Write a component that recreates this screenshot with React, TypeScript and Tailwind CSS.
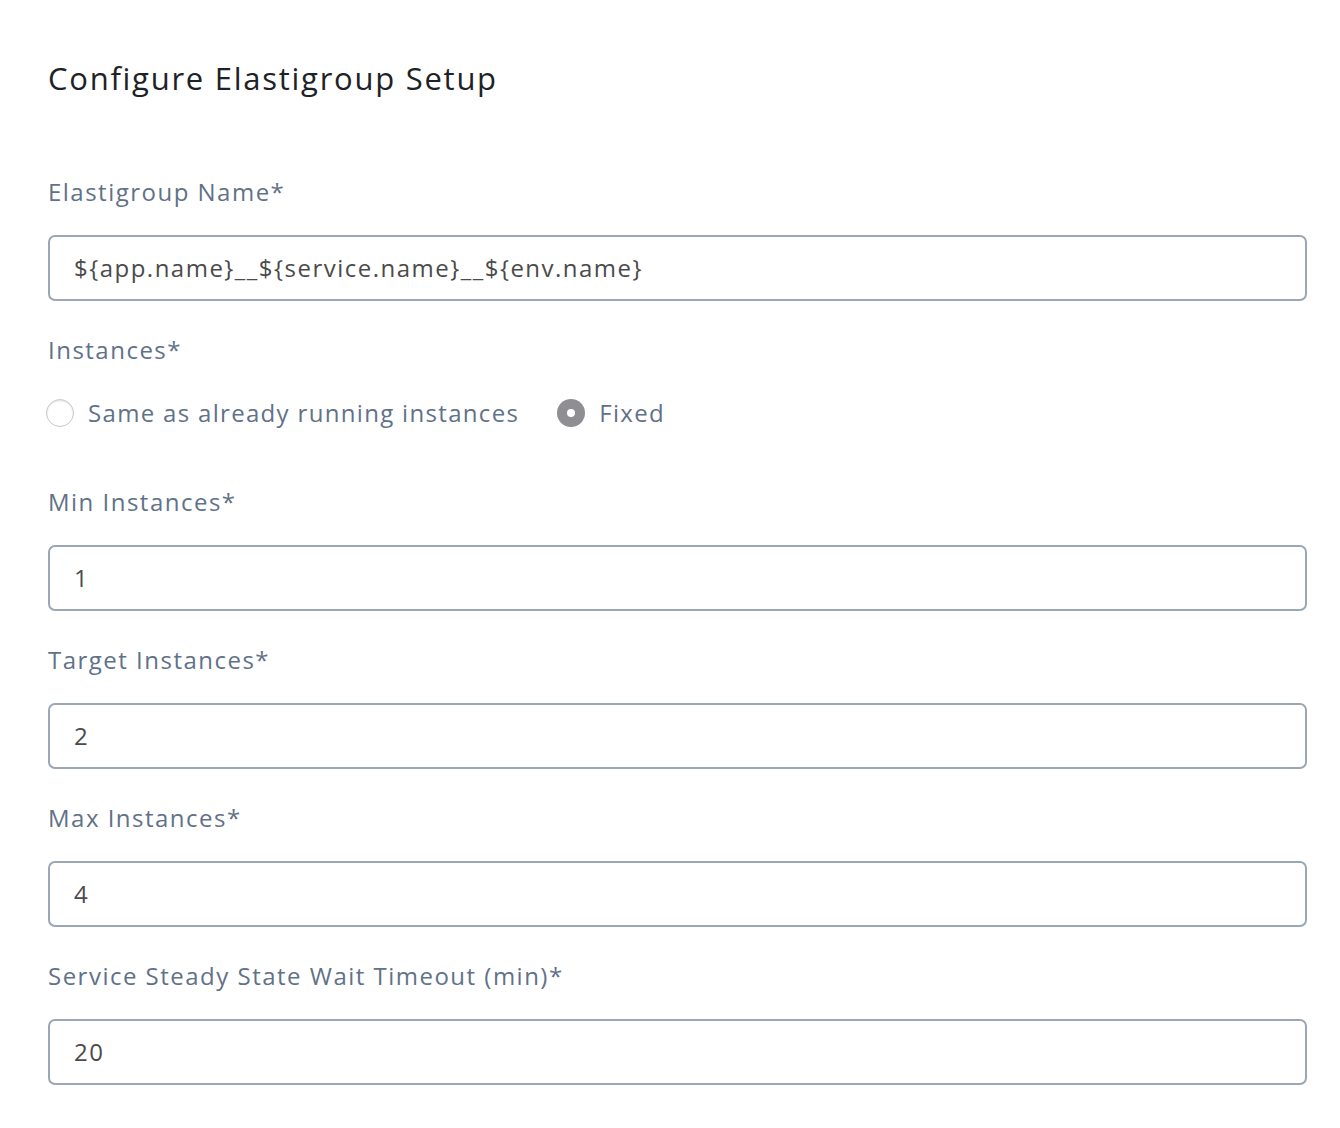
import React from 'react';

const fields = [
  { label: 'Min Instances*', value: '1' },
  { label: 'Target Instances*', value: '2' },
  { label: 'Max Instances*', value: '4' },
  { label: 'Service Steady State Wait Timeout (min)*', value: '20' },
];

const Label: React.FC<{ children: React.ReactNode; className?: string }> = ({ children, className = '' }) => (
  <div className={`text-[24px] leading-[32px] tracking-[0.062em] text-[#5f7288] ${className}`}>{children}</div>
);

const Input: React.FC<{ value: string }> = ({ value }) => (
  <div className="mt-[27px] flex h-[66px] items-center rounded-[7px] border-2 border-[#9ba6b6] bg-white pl-[24px] text-[24px] tracking-[0.062em] text-[#4b4b4b]">
    {value}
  </div>
);

const App: React.FC = () => {
  return (
    <div className="min-h-screen bg-white pl-[48px] pr-[33px] pt-[58px] pb-10" style={{ fontFamily: '"Open Sans", sans-serif' }}>
      <h1 className="text-[31px] leading-[40px] tracking-[0.056em] text-[#1d2226]">Configure Elastigroup Setup</h1>

      {/* Elastigroup name */}
      <Label className="mt-[78px]">Elastigroup Name*</Label>
      <Input value="${app.name}__${service.name}__${env.name}" />

      {/* Instances radio */}
      <Label className="mt-[33px]">Instances*</Label>
      <div className="mt-[31px] flex h-[32px] items-center text-[24px] tracking-[0.055em] text-[#5f7288]">
        <label className="flex items-center">
          <span className="-ml-[2px] h-[28px] w-[28px] rounded-full border border-[#c9c9c9] bg-white shadow-[inset_0_1px_2px_rgba(0,0,0,0.12)]" />
          <span className="ml-[14px]">Same as already running instances</span>
        </label>
        <label className="ml-[38px] flex items-center">
          <span className="flex h-[28px] w-[28px] items-center justify-center rounded-full bg-[#8e8e93]">
            <span className="h-[8px] w-[8px] rounded-full bg-white" />
          </span>
          <span className="ml-[14px]">Fixed</span>
        </label>
      </div>

      <div className="mt-[57px]">
        {fields.map((f, i) => (
          <div key={f.label} className={i > 0 ? 'mt-[33px]' : ''}>
            <Label>{f.label}</Label>
            <Input value={f.value} />
          </div>
        ))}
      </div>
    </div>
  );
};

export default App;
